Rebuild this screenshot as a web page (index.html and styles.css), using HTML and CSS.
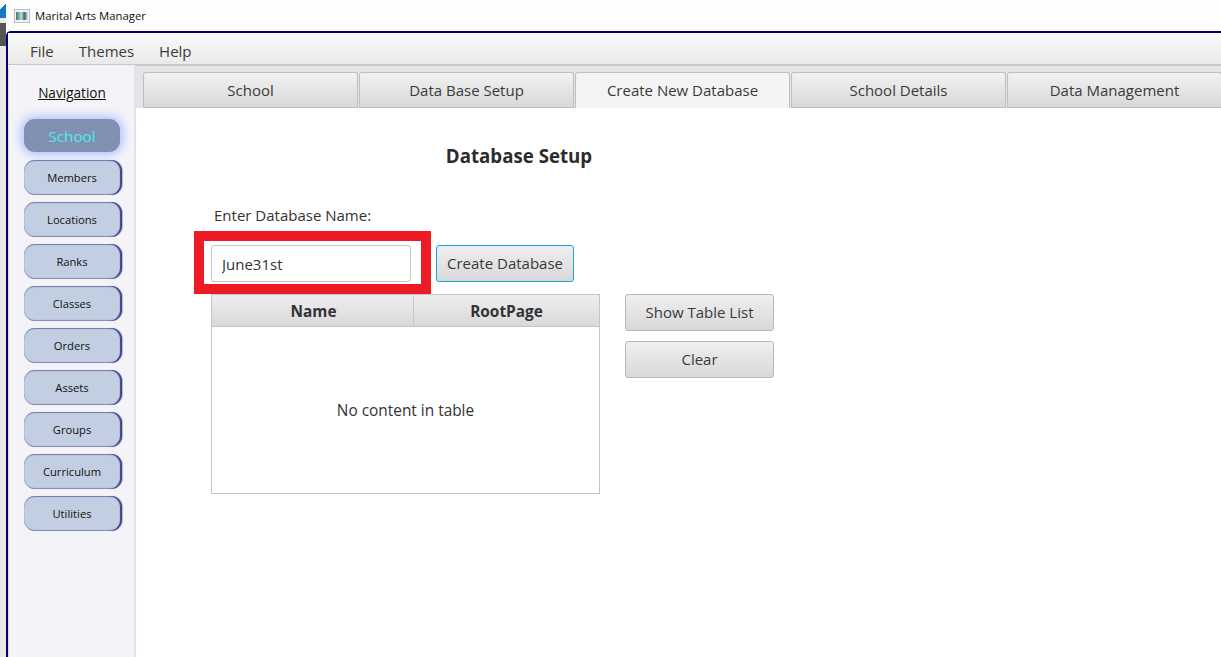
FILE: index.html
```html
<!DOCTYPE html>
<html lang="en">
<head>
    <meta charset="UTF-8">
    <title>Marital Arts Manager</title>
    <link rel="stylesheet" href="styles.css">
</head>
<body>
    <div class="desktop">
        <div class="desk-blue"></div>
        <div class="desk-dark"></div>
    </div>
    <div class="frame">
        <div class="titlebar">
            <svg class="app-icon" width="16" height="14" viewBox="0 0 16 14">
                <defs>
                    <linearGradient id="iconFill">
                        <stop offset="0" stop-color="#2f7f78"/>
                        <stop offset="0.45" stop-color="#b9dcd2"/>
                        <stop offset="0.7" stop-color="#44607c"/>
                        <stop offset="1" stop-color="#e6e6e6"/>
                    </linearGradient>
                </defs>
                <rect x="0.5" y="0.5" width="15" height="13" fill="#f2f2f2" stroke="#bdbdbd"/>
                <rect x="2" y="3" width="12" height="8" fill="url(#iconFill)"/>
            </svg>
            <span class="app-title">Marital Arts Manager</span>
        </div>
        <div class="window">
            <div class="menubar">
                <span class="menu-item">File</span>
                <span class="menu-item">Themes</span>
                <span class="menu-item">Help</span>
            </div>
            <div class="workspace">
                <nav class="sidebar">
                    <div class="nav-title">Navigation</div>
                    <button class="nav-btn nav-active">School</button>
                    <button class="nav-btn">Members</button>
                    <button class="nav-btn">Locations</button>
                    <button class="nav-btn">Ranks</button>
                    <button class="nav-btn">Classes</button>
                    <button class="nav-btn">Orders</button>
                    <button class="nav-btn">Assets</button>
                    <button class="nav-btn">Groups</button>
                    <button class="nav-btn">Curriculum</button>
                    <button class="nav-btn">Utilities</button>
                </nav>
                <main class="main">
                    <div class="tabs">
                        <div class="tab">School</div>
                        <div class="tab">Data Base Setup</div>
                        <div class="tab tab-active">Create New Database</div>
                        <div class="tab">School Details</div>
                        <div class="tab">Data Management</div>
                    </div>
                    <div class="content">
                        <h1 class="heading">Database Setup</h1>
                        <div class="field-label">Enter Database Name:</div>
                        <div class="create-row">
                            <div class="input-wrap">
                                <input class="name-input" type="text" value="June31st">
                                <div class="highlight"></div>
                            </div>
                            <button class="button button-focus create-btn">Create Database</button>
                        </div>
                        <div class="table-row">
                            <div class="table">
                                <div class="table-head">
                                    <div class="col col-name">Name</div>
                                    <div class="col col-root">RootPage</div>
                                </div>
                                <div class="table-empty">No content in table</div>
                            </div>
                            <div class="side-actions">
                                <button class="button side-btn">Show Table List</button>
                                <button class="button side-btn">Clear</button>
                            </div>
                        </div>
                    </div>
                </main>
            </div>
        </div>
    </div>
</body>
</html>
```

FILE: styles.css
```css
* {
    box-sizing: border-box;
}
html, body {
    height: 100%;
}
body {
    margin: 0;
    display: flex;
    overflow: hidden;
    background-color: #fff;
    color: #333;
    font-family: "Open Sans", "Noto Sans", Arial, sans-serif;
}

/* Desktop behind the window */
.desktop {
    width: 6px;
    flex: none;
    background-color: #e9e9e9;
}
.desk-blue {
    height: 18px;
    background: linear-gradient(135deg, #fff 40%, #1976c8 40%);
    margin-bottom: 5px;
}
.desk-dark {
    height: 23px;
    background-color: #555;
}

.frame {
    flex: 1;
    min-width: 0;
    display: flex;
    flex-direction: column;
}
.titlebar {
    height: 31px;
    flex: none;
    display: flex;
    align-items: center;
    padding-left: 8px;
    background-color: #fdfdfd;
}
.app-icon {
    margin-right: 5px;
}
.app-title {
    font-size: 11.3px;
    color: #111;
}
.window {
    flex: 1;
    display: flex;
    flex-direction: column;
    min-height: 0;
    border-top: 2px solid #000066;
    border-left: 2px solid #000066;
    border-top-left-radius: 5px;
}

/* Menu */
.menubar {
    height: 32px;
    flex: none;
    display: flex;
    align-items: center;
    gap: 25px;
    padding: 4px 0 0 22px;
    background: linear-gradient(#fafafa, #e9e9e9);
    border-bottom: 1px solid #c8c8c8;
    font-size: 15px;
}
.menu-item {
    color: #3a3a3a;
}

.workspace {
    flex: 1;
    display: flex;
    min-height: 0;
}

/* Sidebar */
.sidebar {
    width: 128px;
    flex: none;
    display: flex;
    flex-direction: column;
    align-items: flex-start;
    padding: 0 0 0 15px;
    background-color: #f4f4f8;
    border-left: 1px solid #dcdcdc;
    border-right: 2px solid #e2e2e8;
    border-top-left-radius: 4px;
}
.nav-title {
    width: 96px;
    margin: 18px 0 16px;
    text-align: center;
    font-size: 13.6px;
    line-height: 20px;
    color: #111;
    text-decoration: underline;
}
.nav-btn {
    width: 98px;
    height: 35px;
    margin-bottom: 7px;
    padding: 0 2px 1px 0;
    font-family: inherit;
    font-size: 11.2px;
    color: #111;
    background-color: #c2cfe2;
    border: none;
    border-radius: 11px;
    box-shadow: inset -2px 0 1px #3f3f88, inset 0 1px 1px #7d7db0, inset 0 -1px 1px #9090bd, 1px 0 1px #b8b8cc;
}
.nav-active {
    width: 96px;
    height: 33px;
    margin-bottom: 8px;
    padding: 0;
    font-size: 15.2px;
    color: #45f0ee;
    background-color: #8190b0;
    box-shadow: 0 0 10px 3px #b0c2ff;
}

/* Tabs */
.main {
    flex: 1;
    min-width: 0;
    display: flex;
    flex-direction: column;
}
.tabs {
    height: 43px;
    flex: none;
    display: flex;
    gap: 1px;
    padding: 6px 0 0 7px;
    background-color: #e4e4e4;
    border-top: 1px solid #c8c8c8;
    overflow: hidden;
}
.tab {
    width: 215px;
    flex: none;
    display: flex;
    align-items: center;
    justify-content: center;
    font-size: 15px;
    color: #3a3a3a;
    background: linear-gradient(#f2f2f2, #d8d8d8);
    border: 1px solid #c0c0c0;
    border-bottom-color: #bbb;
    border-radius: 3px 3px 0 0;
}
.tab-active {
    background: #f4f4f4;
    border-bottom: none;
    padding-bottom: 1px;
}

/* Content */
.content {
    flex: 1;
    padding: 34px 0 0 75px;
    background-color: #fff;
}
.heading {
    width: 616px;
    margin: 0;
    text-align: center;
    font-size: 18.7px;
    line-height: 28px;
    font-weight: 700;
    color: #2c2c2c;
}
.field-label {
    margin: 35px 0 0 3px;
    font-size: 15px;
    line-height: 20px;
}
.create-row {
    display: flex;
    gap: 25px;
    margin-top: 20px;
}
.input-wrap {
    position: relative;
}
.name-input {
    display: block;
    width: 200px;
    height: 37px;
    padding: 0 10px;
    font-family: inherit;
    font-size: 15px;
    color: #333;
    background-color: #fff;
    border: 1px solid #c4c4c4;
    border-radius: 3px;
}
/* red marker painted over the screenshot */
.highlight {
    position: absolute;
    left: -17px;
    top: -14px;
    width: 237px;
    height: 63px;
    border: 10px solid #ed1c24;
}
.button {
    font-family: inherit;
    font-size: 15px;
    color: #3a3a3a;
    background: linear-gradient(#efefef, #d8d8d8);
    border: 1px solid #b8b8b8;
    border-radius: 3px;
    padding: 0 0 2px;
}
.button-focus {
    border-color: #12a5e0;
}
.create-btn {
    width: 138px;
    height: 37px;
}
.table-row {
    display: flex;
    gap: 25px;
    margin-top: 12px;
}
.table {
    width: 389px;
    height: 200px;
    display: flex;
    flex-direction: column;
    border: 1px solid #c4c4c4;
}
.table-head {
    height: 32px;
    flex: none;
    display: flex;
    padding-top: 1px;
    background: linear-gradient(#eeeeee, #d9d9d9);
    border-bottom: 1px solid #c4c4c4;
    font-size: 15.4px;
    font-weight: 700;
    color: #333;
}
.col {
    display: flex;
    align-items: center;
    justify-content: center;
}
.col-name {
    width: 202px;
    padding-left: 2px;
    border-right: 1px solid #c8c8c8;
}
.col-root {
    flex: 1;
}
.table-empty {
    flex: 1;
    display: flex;
    align-items: center;
    justify-content: center;
    font-size: 15.4px;
}
.side-actions {
    display: flex;
    flex-direction: column;
    gap: 10px;
}
.side-btn {
    width: 149px;
    height: 37px;
}
```
